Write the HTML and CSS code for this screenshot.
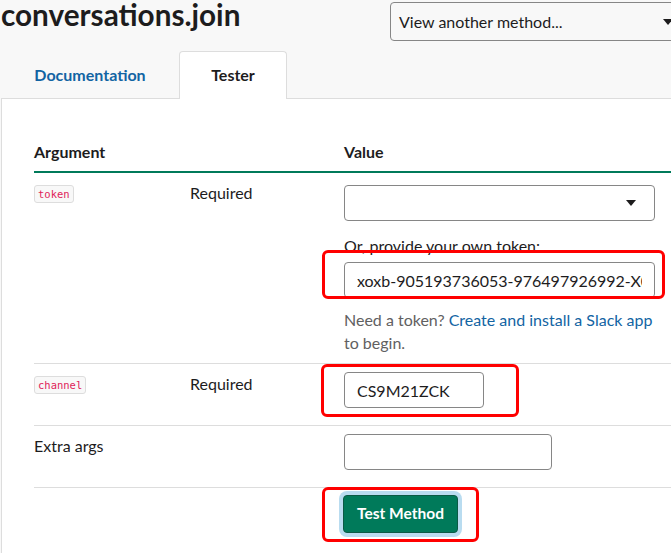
FILE: index.html
```html
<!DOCTYPE html>
<html lang="en">
<head>
<meta charset="utf-8">
<title>conversations.join</title>
<link rel="stylesheet" href="styles.css">
</head>
<body>
<div class="page">
  <header class="top">
    <h1 class="title">conversations.join</h1>
    <div class="method-select">
      <span>View another method...</span>
      <span class="caret"></span>
    </div>
  </header>
  <nav class="tabs">
    <a class="tab" href="#">Documentation</a>
    <a class="tab active" href="#">Tester</a>
  </nav>
  <section class="panel">
    <div class="table">
      <div class="row head">
        <div class="cell">Argument</div>
        <div class="cell"></div>
        <div class="cell">Value</div>
      </div>
      <div class="row">
        <div class="cell arg"><code class="badge">token</code></div>
        <div class="cell req">Required</div>
        <div class="cell val val-first">
          <div class="select"><span class="caret"></span></div>
          <div class="label">Or, provide your own token:</div>
          <input class="field wide" type="text" value="xoxb-905193736053-976497926992-X0fJmJ8JYZmGKs">
          <p class="help">Need a token? <a href="#">Create and install a Slack app</a> to begin.</p>
        </div>
      </div>
      <div class="row">
        <div class="cell arg"><code class="badge">channel</code></div>
        <div class="cell req">Required</div>
        <div class="cell val"><input class="field short" type="text" value="CS9M21ZCK"></div>
      </div>
      <div class="row">
        <div class="cell req">Extra args</div>
        <div class="cell"></div>
        <div class="cell val"><input class="field mid" type="text" value=""></div>
      </div>
      <div class="row last">
        <div class="cell"></div>
        <div class="cell"></div>
        <div class="cell btn-cell"><button class="test-btn" type="button">Test Method</button></div>
      </div>
    </div>
  </section>
</div>
<div class="annot annot-token"></div>
<div class="annot annot-channel"></div>
<div class="annot annot-button"></div>
</body>
</html>
```
FILE: styles.css
```css
html, body {
  margin: 0;
  padding: 0;
  overflow: hidden;
}
body {
  background: #f8f8f8;
  font-family: Lato, "Open Sans", sans-serif;
  color: #1d1c1d;
  font-size: 16px;
  width: 671px;
  height: 553px;
  position: relative;
}
.page {
  width: 720px;
}
.top {
  display: grid;
  grid-template-columns: 390px 302px;
  height: 41px;
}
.title {
  margin: 0;
  padding-left: 1px;
  font-size: 29.7px;
  line-height: 30px;
  font-weight: 700;
}
.method-select {
  margin-top: 2px;
  height: 39px;
  box-sizing: border-box;
  border: 1px solid #868686;
  border-radius: 4px;
  background: #f8f8f8;
  display: flex;
  align-items: center;
  justify-content: space-between;
  padding: 0 18px 0 8px;
  font-size: 16px;
}
.caret {
  width: 0;
  height: 0;
  border-left: 5.5px solid transparent;
  border-right: 5.5px solid transparent;
  border-top: 6px solid #1d1c1d;
}
.tabs {
  display: flex;
  margin: 10px 0 0 1px;
  height: 47px;
  position: relative;
  z-index: 1;
}
.tab {
  box-sizing: border-box;
  height: 48px;
  padding: 0 20px 3px;
  border: 1px solid transparent;
  border-bottom: none;
  border-radius: 4px 4px 0 0;
  display: flex;
  align-items: center;
  justify-content: center;
  font-weight: 700;
  font-size: 16px;
  color: #1264a3;
  text-decoration: none;
}
.tab:first-child {
  width: 178px;
}
.tab.active {
  width: 108px;
  background: #fff;
  border-color: #dddddd;
  color: #1d1c1d;
}
.panel {
  margin-left: 1px;
  background: #fff;
  border-top: 1px solid #dddddd;
  border-left: 1px solid #dddddd;
  padding: 42px 0 30px 32px;
  min-height: 460px;
}
.row {
  display: grid;
  grid-template-columns: 156px 154px 1fr;
  border-bottom: 1px solid #dddddd;
}
.row.head {
  border-bottom: 2px solid #007a5a;
  font-weight: 700;
}
.row.head .cell {
  line-height: 22px;
  padding-bottom: 8px;
}
.row.last {
  border-bottom: none;
}
.arg {
  padding-top: 12px;
  display: flex;
  align-items: flex-start;
}
.badge {
  display: block;
  box-sizing: border-box;
  height: 18px;
  line-height: 16px;
  padding: 0 3px;
  border: 1px solid #dddddd;
  border-radius: 3px;
  background: #f8f8f8;
  color: #e01e5a;
  font-family: "DejaVu Sans Mono", "Liberation Mono", monospace;
  font-size: 10.5px;
}
.req {
  padding-top: 9px;
  line-height: 22px;
}
.val {
  padding: 8px 0 17px;
}
.val-first {
  padding: 12px 0 9px;
}
.select {
  width: 311px;
  height: 36px;
  box-sizing: border-box;
  border: 1px solid #868686;
  border-radius: 4px;
  background: #fff;
  display: flex;
  align-items: center;
  justify-content: flex-end;
  padding-right: 18px;
}
.label {
  margin-top: 14px;
  line-height: 22px;
}
.field {
  display: block;
  box-sizing: border-box;
  height: 36px;
  border: 1px solid #868686;
  border-radius: 4px;
  padding: 0 12px;
  font-family: Lato, "Open Sans", sans-serif;
  font-size: 16px;
  color: #1d1c1d;
  background: #fff;
  outline: none;
}
.label + .field {
  margin-top: 5px;
}
.wide { width: 311px; }
.short { width: 140px; }
.mid { width: 208px; }
.help {
  margin: 10px 0 0;
  width: 318px;
  line-height: 23px;
  color: #616061;
}
.help a {
  color: #1264a3;
  text-decoration: none;
}
.btn-cell {
  padding-top: 7px;
}
.test-btn {
  width: 115px;
  height: 38px;
  margin-left: -1px;
  padding: 0 0 2px;
  border: 1px solid #0b5a45;
  border-radius: 4px;
  background: #007a5a;
  color: #fff;
  font-family: Lato, "Open Sans", sans-serif;
  font-weight: 700;
  font-size: 15.5px;
  box-shadow: 0 0 0 4px #b9dcf0;
  cursor: pointer;
}
.annot {
  position: absolute;
  box-sizing: border-box;
  border: 3px solid #ff0000;
  border-radius: 6px;
  pointer-events: none;
}
.annot-token {
  left: 322px;
  top: 250px;
  width: 343px;
  height: 49px;
}
.annot-channel {
  left: 321px;
  top: 364px;
  width: 198px;
  height: 53px;
}
.annot-button {
  left: 322px;
  top: 487px;
  width: 157px;
  height: 55px;
}
```
